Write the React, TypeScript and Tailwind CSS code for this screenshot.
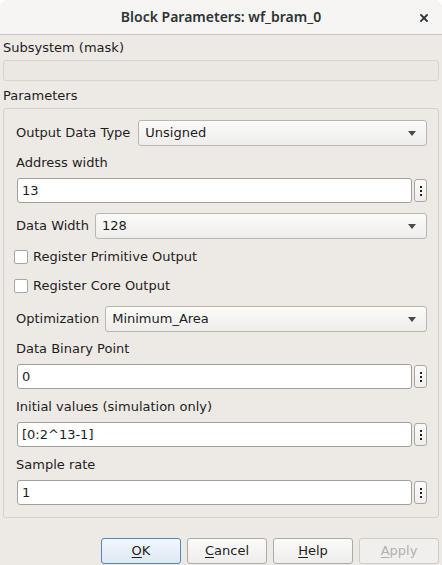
import React from "react";

const font = { fontFamily: '"DejaVu Sans", sans-serif' };

function Combo({ value }: { value: string }) {
  return (
    <div className="flex-1 h-[26px] border border-[#b9b5b0] rounded-[3px] bg-gradient-to-b from-[#fbfbfa] to-[#eeedeb] flex items-center pl-[6px] pr-[10px] text-[#1d1d1d]">
      <span className="flex-1">{value}</span>
      <svg width="8" height="5" viewBox="0 0 8 5">
        <path d="M0 0 L8 0 L4 5 Z" fill="#4a4a4a" />
      </svg>
    </div>
  );
}

function Field({ value }: { value: string }) {
  return (
    <div className="flex items-center gap-[2px]">
      <div className="flex-1 h-[25px] border border-[#a3a09c] rounded-[3px] bg-white flex items-center pl-[4px] text-[#1d1d1d]">
        {value}
      </div>
      <div className="w-[13px] h-[23px] border border-[#aaa7a3] rounded-[3px] bg-gradient-to-b from-[#fbfbfa] to-[#efeeec] flex flex-col items-center justify-center gap-[2px]">
        <div className="w-[2px] h-[2px] bg-[#222]" />
        <div className="w-[2px] h-[2px] bg-[#222]" />
        <div className="w-[2px] h-[2px] bg-[#222]" />
      </div>
    </div>
  );
}

function Check({ label }: { label: string }) {
  return (
    <div className="flex items-center h-[16px] -ml-[2px]">
      <div className="w-[14px] h-[14px] border border-[#aaa6a1] rounded-[2px] bg-white" />
      <span className="ml-[5px] text-[#1d1d1d]">{label}</span>
    </div>
  );
}

function Btn({ ul, rest, primary, disabled }: { ul: string; rest: string; primary?: boolean; disabled?: boolean }) {
  const cls = primary
    ? "border-[#4f89c2] bg-gradient-to-b from-[#f2f7fb] to-[#dde9f3] text-[#1d1d1d]"
    : disabled
    ? "border-[#cfccc8] bg-[#f1efed] text-[#b3b0ac]"
    : "border-[#aeaba7] bg-gradient-to-b from-[#fbfbfa] to-[#eeedeb] text-[#1d1d1d]";
  return (
    <div className={`w-[80px] h-[26px] border rounded-[3px] flex items-center justify-center ${cls}`}>
      <span>
        <span className="underline underline-offset-[2px]">{ul}</span>
        {rest}
      </span>
    </div>
  );
}

export default function App() {
  return (
    <div className="w-[442px] h-[565px] bg-white overflow-hidden text-[13px] leading-[16px]" style={font}>
      <div className="w-full h-full bg-[#edeae6] rounded-t-[8px] overflow-hidden flex flex-col">
        <div className="h-[35px] shrink-0 bg-[#f6f5f4] border-b border-[#c9c6c2] flex items-center justify-center relative">
          <span className="font-semibold text-[14px] text-[#2e3436]" style={{ fontFamily: '"Noto Sans", sans-serif' }}>
            Block Parameters: wf_bram_0
          </span>
          <svg className="absolute right-[14px] top-[14px]" width="8" height="8" viewBox="0 0 8 8">
            <path d="M1 1 L7 7 M7 1 L1 7" stroke="#2e3436" strokeWidth="1.8" strokeLinecap="square" />
          </svg>
        </div>
        <div className="mt-[5px] ml-[3px] text-[#1d1d1d]">Subsystem (mask)</div>
        <div className="mt-[4px] mx-[3px] h-[21px] border border-[#d7d3ce] rounded-[3px] bg-[#ebe8e4]" />
        <div className="mt-[7px] ml-[3px] text-[#1d1d1d]">Parameters</div>
        <div className="mt-[4px] mx-[3px] h-[410px] border border-[#d4d0cb] rounded-[3px] pl-[12px] pr-[11px] pt-[11px] flex flex-col text-[#1d1d1d]">
          <div className="flex items-center gap-[8px]">
            <span>Output Data Type</span>
            <Combo value="Unsigned" />
          </div>
          <div className="mt-[9px]">Address width</div>
          <div className="mt-[7px] ml-[1px]">
            <Field value="13" />
          </div>
          <div className="mt-[10px] flex items-center gap-[6px]">
            <span>Data Width</span>
            <Combo value="128" />
          </div>
          <div className="mt-[10px]">
            <Check label="Register Primitive Output" />
          </div>
          <div className="mt-[13px]">
            <Check label="Register Core Output" />
          </div>
          <div className="mt-[12px] flex items-center gap-[6px]">
            <span>Optimization</span>
            <Combo value="Minimum_Area" />
          </div>
          <div className="mt-[9px]">Data Binary Point</div>
          <div className="mt-[7px] ml-[1px]">
            <Field value="0" />
          </div>
          <div className="mt-[10px]">Initial values (simulation only)</div>
          <div className="mt-[7px] ml-[1px]">
            <Field value="[0:2^13-1]" />
          </div>
          <div className="mt-[10px]">Sample rate</div>
          <div className="mt-[7px] ml-[1px]">
            <Field value="1" />
          </div>
        </div>
        <div className="mt-[20px] mr-[3px] flex justify-end gap-[6px]">
          <Btn primary ul="O" rest="K" />
          <Btn ul="C" rest="ancel" />
          <Btn ul="H" rest="elp" />
          <Btn disabled ul="A" rest="pply" />
        </div>
      </div>
    </div>
  );
}
